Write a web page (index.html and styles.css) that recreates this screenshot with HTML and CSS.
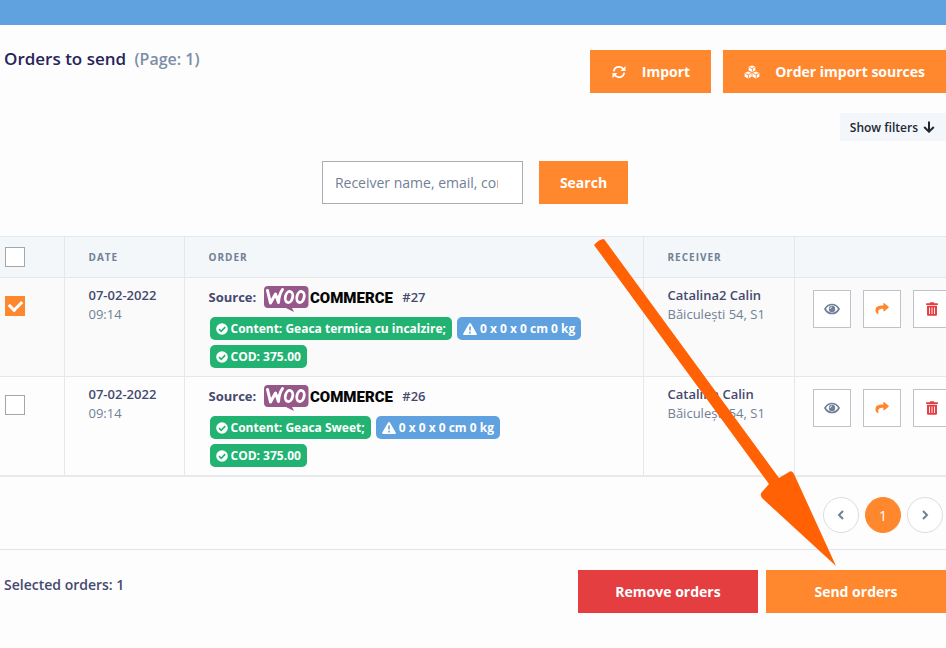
FILE: index.html
```
<!DOCTYPE html>
<html lang="en">
<head>
  <meta charset="UTF-8">
  <meta name="viewport" content="width=device-width, initial-scale=1">
  <title>Orders to send</title>
  <link rel="stylesheet" href="styles.css">
</head>
<body>

  <!-- icon and logo symbols -->
  <svg class="sprite" aria-hidden="true">
    <symbol id="i-refresh" viewBox="0 0 16 16">
      <path fill="none" stroke="currentColor" stroke-width="2" d="M2 7.2C2.5 4 5 2 8 2c2.300 0 4 1 5.200 2.800M14 8.800C13.500 12 11 14 8 14c-2.300 0-4-1-5.200-2.800"/>
      <path fill="currentColor" d="M15.500 1v5.800H9.700zM.5 15V9.200h5.800z"/>
    </symbol>
    <symbol id="i-cubes" viewBox="0 0 18 16">
      <path fill="currentColor" d="M9 .5l3.800 1.500v4.200L9 7.900 5.200 6.200V2zM4.600 7.400l3.900 1.600v4.400l-3.900 2-4-2V9zM13.400 7.400l4 1.600v4.400l-4 2-3.900-2V9z"/>
      <path fill="none" stroke="#ff872e" stroke-width="1" d="M6 2.700l3 1.300 3-1.300M9.500 4.200v3M1.300 9.700l3.300 1.400 3.200-1.400M5.100 11.300v3.500M10.200 9.700l3.200 1.400 3.300-1.400M13.900 11.300v3.500"/>
    </symbol>
    <symbol id="i-down" viewBox="0 0 12 12">
      <path fill="none" stroke="currentColor" stroke-width="2" d="M6 .5v10M1.200 6L6 10.700 10.800 6"/>
    </symbol>
    <symbol id="i-eye" viewBox="0 0 16 12">
      <path fill="none" stroke="currentColor" stroke-width="1.700" d="M1 6c1.600-2.900 4-4.500 7-4.500S13.400 3.100 15 6c-1.600 2.900-4 4.500-7 4.500S2.600 8.900 1 6z"/>
      <circle cx="8" cy="6" r="3.200" fill="currentColor"/>
      <path fill="none" stroke="#fff" stroke-width="1" d="M6.200 6c0-1.100.7-1.800 1.800-1.800"/>
    </symbol>
    <symbol id="i-share" viewBox="0 0 16 14">
      <path fill="currentColor" d="M9.500.8c0-.6.700-.9 1.200-.5l4.800 4c.4.300.4.900 0 1.200l-4.800 4c-.5.400-1.200.1-1.200-.5V6.800C5 6.800 3 8 4 12.200c.1.600-.5 1-1 .6C1.300 11.600.5 10 .5 8.300.5 4.200 4 3 9.500 3z"/>
    </symbol>
    <symbol id="i-trash" viewBox="0 0 14 16">
      <path fill="currentColor" fill-rule="evenodd" d="M.8 1.500h3.500L5 .3h4l.7 1.200h3.500c.3 0 .5.200.5.500v1.300H.3V2c0-.3.200-.5.500-.5zM1.300 4.300h11.400v9.900c0 .8-.6 1.500-1.400 1.500H2.700c-.8 0-1.400-.7-1.400-1.500zM3.600 6.200v7.600h1V6.200zm2.900 0v7.600h1V6.200zm2.900 0v7.600h1V6.200z"/>
    </symbol>
    <symbol id="i-ok" viewBox="0 0 12 12">
      <circle cx="6" cy="6" r="5.800" fill="currentColor"/>
      <path fill="none" stroke="#22b373" stroke-width="1.600" d="M3 6.200l2.200 2.100 4-4.200"/>
    </symbol>
    <symbol id="i-warn" viewBox="0 0 14 12">
      <path fill="currentColor" d="M6.100.6c.4-.7 1.400-.7 1.800 0l5.800 9.800c.4.700-.1 1.500-.9 1.500H1.200c-.8 0-1.300-.8-.9-1.500z"/>
      <path stroke="#60a1df" stroke-width="1.600" d="M7 3.600v3.900M7 8.700v1.700"/>
    </symbol>
    <symbol id="i-prev" viewBox="0 0 8 10">
      <path fill="none" stroke="currentColor" stroke-width="2" d="M6 1L2 5l4 4"/>
    </symbol>
    <symbol id="i-next" viewBox="0 0 8 10">
      <path fill="none" stroke="currentColor" stroke-width="2" d="M2 1l4 4-4 4"/>
    </symbol>
    <symbol id="woo" viewBox="0 0 130 26">
      <path fill="#96588a" d="M4 0h36.500a4 4 0 0 1 4 4v14a4 4 0 0 1-4 4H28l2 4-8-4H4a4 4 0 0 1-4-4V4a4 4 0 0 1 4-4z"/>
      <path fill="none" stroke="#fff" stroke-width="3" stroke-linecap="round" stroke-linejoin="round" d="M3.500 4.500L6.500 17l5-9 3 8.500q.5-8 4-13"/>
      <ellipse cx="25" cy="11" rx="3.600" ry="5.600" fill="none" stroke="#fff" stroke-width="2.800" transform="rotate(14 25 11)"/>
      <ellipse cx="36.500" cy="11" rx="3.600" ry="5.600" fill="none" stroke="#fff" stroke-width="2.800" transform="rotate(14 36.500 11)"/>
      <text class="logo-text" x="46" y="17">COMMERCE</text>
    </symbol>
  </svg>

  <header class="topbar"></header>

  <main class="page">
    <div class="page-head">
      <h1>Orders to send <span>(Page: 1)</span></h1>
      <div class="head-buttons">
        <button class="btn" type="button"><svg class="icon-16"><use href="#i-refresh"/></svg>Import</button>
        <button class="btn" type="button"><svg class="icon-16"><use href="#i-cubes"/></svg>Order import sources</button>
      </div>
    </div>

    <div class="filters">
      <button class="filter-toggle" type="button">Show filters <svg class="icon-12"><use href="#i-down"/></svg></button>
    </div>

    <form class="search">
      <input type="text" aria-label="Search orders" placeholder="Receiver name, email, content">
      <button class="btn" type="button">Search</button>
    </form>

    <table class="orders">
      <colgroup>
        <col class="col-check">
        <col class="col-date">
        <col>
        <col class="col-receiver">
        <col class="col-actions">
      </colgroup>
      <thead>
        <tr>
          <th class="check"><input type="checkbox" aria-label="Select all"></th>
          <th>Date</th>
          <th>Order</th>
          <th>Receiver</th>
          <th></th>
        </tr>
      </thead>
      <tbody>
        <tr class="selected">
          <td class="check"><input type="checkbox" aria-label="Select order 27" checked></td>
          <td><strong>07-02-2022</strong><br>09:14</td>
          <td>
            <div class="source"><strong>Source:</strong><svg class="logo" role="img" aria-label="WooCommerce"><use href="#woo"/></svg><b>#27</b></div>
            <div class="tags">
              <span class="tag"><svg class="icon-12"><use href="#i-ok"/></svg>Content: Geaca termica cu incalzire;</span>
              <span class="tag blue"><svg class="icon-14"><use href="#i-warn"/></svg>0 x 0 x 0 cm 0 kg</span>
              <span class="tag"><svg class="icon-12"><use href="#i-ok"/></svg>COD: 375.00</span>
            </div>
          </td>
          <td><strong>Catalina2 Calin</strong><br>Băiculești 54, S1</td>
          <td class="actions">
            <div>
              <button type="button" aria-label="View"><svg class="icon-16"><use href="#i-eye"/></svg></button>
              <button class="send" type="button" aria-label="Send"><svg class="icon-14"><use href="#i-share"/></svg></button>
              <button class="remove" type="button" aria-label="Remove"><svg class="icon-14"><use href="#i-trash"/></svg></button>
            </div>
          </td>
        </tr>
        <tr>
          <td class="check"><input type="checkbox" aria-label="Select order 26"></td>
          <td><strong>07-02-2022</strong><br>09:14</td>
          <td>
            <div class="source"><strong>Source:</strong><svg class="logo" role="img" aria-label="WooCommerce"><use href="#woo"/></svg><b>#26</b></div>
            <div class="tags">
              <span class="tag"><svg class="icon-12"><use href="#i-ok"/></svg>Content: Geaca Sweet;</span>
              <span class="tag blue"><svg class="icon-14"><use href="#i-warn"/></svg>0 x 0 x 0 cm 0 kg</span>
              <span class="tag"><svg class="icon-12"><use href="#i-ok"/></svg>COD: 375.00</span>
            </div>
          </td>
          <td><strong>Catalina Calin</strong><br>Băiculești 54, S1</td>
          <td class="actions">
            <div>
              <button type="button" aria-label="View"><svg class="icon-16"><use href="#i-eye"/></svg></button>
              <button class="send" type="button" aria-label="Send"><svg class="icon-14"><use href="#i-share"/></svg></button>
              <button class="remove" type="button" aria-label="Remove"><svg class="icon-14"><use href="#i-trash"/></svg></button>
            </div>
          </td>
        </tr>
      </tbody>
    </table>

    <nav class="pagination" aria-label="Pages">
      <a href="#" aria-label="Previous"><svg class="icon-10"><use href="#i-prev"/></svg></a>
      <a class="active" href="#">1</a>
      <a href="#" aria-label="Next"><svg class="icon-10"><use href="#i-next"/></svg></a>
    </nav>

    <footer class="bulk">
      <p>Selected orders: 1</p>
      <div class="bulk-buttons">
        <button class="btn danger" type="button">Remove orders</button>
        <button class="btn" type="button">Send orders</button>
      </div>
    </footer>

    <!-- arrow pointing at the send button -->
    <svg class="pointer" viewBox="0 0 250 334" aria-hidden="true">
      <path fill="#ff6104" d="M4 9Q9 3 14 3L189 242l10-6q3-2 5 2L246 330 173 263q-4-4-1-7l7-8z"/>
    </svg>
  </main>

</body>
</html>
```
FILE: styles.css
```
* {
  box-sizing: border-box;
}

body {
  margin: 0;
  background: #fdfdfd;
  color: #718096;
  font: 13px/19px "Open Sans", sans-serif;
}

button, input {
  font-family: inherit;
}

svg {
  display: block;
  flex: none;
}

.sprite {
  display: none;
}

.icon-10 { width: 10px; height: 10px; }
.icon-12 { width: 12px; height: 12px; }
.icon-14 { width: 14px; height: 14px; }
.icon-16 { width: 16px; height: 14px; }

.topbar {
  height: 25px;
  background: #60a1df;
}

.page {
  position: relative;
  overflow: hidden;
}

.page-head {
  display: flex;
  justify-content: space-between;
  padding: 25px 0 20px 4px;
}

h1 {
  margin: 0;
  color: #27245a;
  font-size: 17px;
  line-height: 18px;
  font-weight: 600;
}

h1 span {
  margin-left: 4px;
  color: #7c8ea5;
  font-size: 16px;
}

.head-buttons {
  display: flex;
  gap: 12px;
}

.btn {
  display: flex;
  align-items: center;
  justify-content: center;
  gap: 15px;
  height: 43px;
  padding: 0 21px;
  border: 0;
  background: #ff872e;
  color: #fff;
  font-size: 14px;
  font-weight: 700;
  cursor: pointer;
}

.btn.danger {
  background: #e53e41;
}

.filters {
  display: flex;
  justify-content: flex-end;
}

.filter-toggle {
  display: flex;
  align-items: center;
  gap: 5px;
  height: 28px;
  padding: 0 11px 0 10px;
  border: 0;
  background: #f3f7fb;
  color: #22272f;
  font-size: 12px;
  font-weight: 600;
}

.search {
  display: flex;
  justify-content: center;
  gap: 16px;
  padding: 20px 0 32px 4px;
}

.search input {
  width: 201px;
  height: 43px;
  padding: 0 24px 0 12px;
  border: 1px solid #a9acb0;
  background: #fff;
  font-size: 14px;
}

.search input::placeholder {
  color: #718096;
}

.orders {
  width: 100%;
  table-layout: fixed;
  border-collapse: collapse;
  border-bottom: 2px solid #e6eaed;
}

.col-check { width: 64px; }
.col-date { width: 120px; }
.col-receiver { width: 151px; }
.col-actions { width: 152px; }

.orders th,
.orders td {
  padding: 8px 24px;
  border-top: 1px solid #e2e8ec;
  border-right: 1px solid #e2e8ec;
  text-align: left;
  vertical-align: top;
}

.orders th:last-child,
.orders td:last-child {
  border-right: 0;
}

.orders th {
  height: 41px;
  padding: 0 24px;
  background: #f3f7fa;
  color: #718096;
  font-size: 10px;
  font-weight: 700;
  letter-spacing: 1px;
  text-transform: uppercase;
  vertical-align: middle;
}

.orders td {
  height: 99px;
}

.orders .selected {
  background: #fafafa;
}

.orders strong,
.orders b {
  color: #45496f;
  font-weight: 600;
}

.orders .check {
  padding-left: 5px;
}

.orders td.check {
  padding-top: 18px;
}

.check input {
  display: block;
  appearance: none;
  width: 20px;
  height: 20px;
  margin: 0;
  border: 1px solid #a3a7ac;
  background: #fff;
}

.check input:checked {
  display: flex;
  align-items: center;
  justify-content: center;
  border-color: #ff872e;
  background: #ff872e;
}

.check input:checked::before {
  content: "";
  width: 10px;
  height: 6px;
  margin-bottom: 3px;
  border: solid #fff;
  border-width: 0 0 3px 3px;
  transform: rotate(-45deg);
}

.source {
  display: flex;
  align-items: center;
  gap: 8px;
  height: 26px;
  margin-bottom: 5px;
}

.source strong,
.source b {
  padding-bottom: 4px;
}

.orders .source strong {
  font-weight: 700;
}

.logo {
  width: 130px;
  height: 26px;
}

.logo-text {
  fill: #050505;
  font-family: Roboto, "Open Sans", sans-serif;
  font-size: 15px;
  font-weight: 900;
}

.tags {
  display: flex;
  flex-wrap: wrap;
  gap: 5px;
  max-width: 384px;
  padding-left: 1px;
}

.tag {
  display: flex;
  align-items: center;
  gap: 3px;
  height: 23px;
  padding: 0 6px;
  border-radius: 5px;
  background: #22b373;
  color: #fff;
  font-size: 12px;
  font-weight: 700;
  white-space: nowrap;
}

.tag.blue {
  background: #60a1df;
}

.orders .actions {
  padding: 12px 0 0 18px;
}

.actions div {
  display: flex;
  gap: 12px;
}

.actions button {
  display: flex;
  flex: none;
  align-items: center;
  justify-content: center;
  width: 38px;
  height: 38px;
  padding: 0;
  border: 1px solid #bfc3c8;
  background: #fff;
  color: #718096;
}

.actions .send {
  color: #ff872e;
}

.actions .remove {
  color: #e53e41;
}

.pagination {
  display: flex;
  justify-content: flex-end;
  gap: 6px;
  padding: 20px 3px 16px;
  border-bottom: 1px solid #e2e6e9;
}

.pagination a {
  display: flex;
  align-items: center;
  justify-content: center;
  width: 36px;
  height: 36px;
  border: 1px solid #d9dcdf;
  border-radius: 50%;
  background: #fff;
  color: #718096;
  font-size: 14px;
  text-decoration: none;
}

.pagination .active {
  border-color: #ff872e;
  background: #ff872e;
  color: #fff;
}

.bulk {
  display: flex;
  justify-content: space-between;
  padding: 20px 0 35px 4px;
}

.bulk p {
  margin: 0;
  padding-top: 5px;
  color: #45496f;
  font-size: 14px;
  font-weight: 600;
}

.bulk-buttons {
  display: flex;
  gap: 8px;
}

.bulk-buttons .btn {
  width: 180px;
}

/* drawn over the table and pagination */
.pointer {
  position: absolute;
  top: 211px;
  right: 106px;
  width: 250px;
  height: 334px;
  pointer-events: none;
}
```
